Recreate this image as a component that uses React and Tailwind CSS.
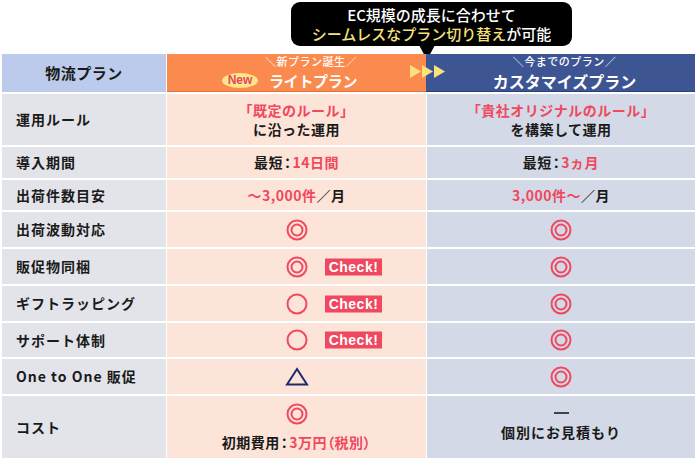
import React from "react";

const RED = "#f0485e";

function DoubleCircle() {
  return (
    <svg width="22" height="22" viewBox="0 0 22 22" className="block">
      <circle cx="11" cy="11" r="9.5" fill="none" stroke={RED} strokeWidth="2" />
      <circle cx="11" cy="11" r="5.5" fill="none" stroke={RED} strokeWidth="2" />
    </svg>
  );
}

function SingleCircle() {
  return (
    <svg width="22" height="22" viewBox="0 0 22 22" className="block">
      <circle cx="11" cy="11" r="9.5" fill="none" stroke={RED} strokeWidth="2" />
    </svg>
  );
}

function Triangle() {
  return (
    <svg width="24" height="19" viewBox="0 0 24 19" className="block">
      <polygon points="12,2 22,17.5 2,17.5" fill="none" stroke="#1d2a6e" strokeWidth="2" strokeLinejoin="miter" />
    </svg>
  );
}

function Check() {
  return (
    <span className="absolute left-[158px] top-1/2 -translate-y-1/2 h-[17px] w-[57px] bg-[#f0485e] text-white text-[14px] leading-[17px] font-bold font-['Liberation_Sans',sans-serif] flex items-center justify-center tracking-[0.5px]">
      Check!
    </span>
  );
}

function Colon() {
  return <span className="[font-feature-settings:'palt'] mx-[1px]">：</span>;
}

function Row({ h, label, orange, blue }) {
  return (
    <div className={`flex gap-x-[1px] ${h}`}>
      <div className="w-[164px] bg-[#e3e4ea] flex items-center pl-[14px] text-[14px] font-bold text-[#1a1a1a] tracking-[1px]">
        {label}
      </div>
      <div className="w-[259px] bg-[#fde4d8] relative flex flex-col items-center justify-center text-[14px] font-bold text-[#1a1a1a] tracking-[0.5px]">
        {orange}
      </div>
      <div className="w-[268px] bg-[#d3d9e6] relative flex flex-col items-center justify-center text-[14px] font-bold text-[#1a1a1a] tracking-[0.5px]">
        {blue}
      </div>
    </div>
  );
}

export default function App() {
  return (
    <div className="w-[700px] h-[461px] bg-white overflow-hidden font-['Noto_Sans_CJK_JP','Noto_Sans',sans-serif]">
      {/* callout area */}
      <div className="h-[54px] pl-[291px] pt-[2px]">
        <div className="relative w-[281px] h-[44px] bg-black rounded-[9px] flex flex-col items-center justify-center text-[15px] leading-[19px] font-medium text-white">
          <div>EC規模の成長に合わせて</div>
          <div>
            <span className="text-[#f6e27c]">シームレスなプラン切り替え</span>が可能
          </div>
          <svg width="16" height="15" viewBox="0 0 16 15" className="absolute left-[128px] top-[43px]">
            <polygon points="0,0 16,0 8,15" fill="black" />
          </svg>
        </div>
      </div>

      {/* table */}
      <div className="pl-[2px] flex flex-col gap-y-[2px]">
        {/* header */}
        <div className="flex h-[38px] relative">
          <div className="w-[164px] bg-[#bccbec] flex items-center justify-center text-[15px] font-bold text-[#1a1a1a] tracking-[0.5px]">
            物流プラン
          </div>
          <div className="w-[1px]" />
          <div className="w-[259px] bg-[#fa8a4e] border-b border-[#e8733a] flex flex-col justify-center text-white">
            <div className="pl-[98px] text-[11px] leading-[12px] font-medium tracking-[0.5px] text-white">＼新プラン誕生／</div>
            <div className="pl-[55px] flex items-center mt-[4px] h-[19px]">
              <span className="w-[36px] h-[15px] rounded-[50%] bg-[#fbe68a] text-[#e8455e] text-[12px] leading-[15px] font-bold font-['Liberation_Sans',sans-serif] flex items-center justify-center">
                New
              </span>
              <span className="ml-[11px] text-[15px] leading-[19px] font-bold tracking-[-0.3px]">ライトプラン</span>
            </div>
          </div>
          <div className="w-[269px] bg-[#3e5594] border-b border-[#2c4178] flex flex-col items-center justify-center pl-[8px] text-white">
            <div className="text-[11px] leading-[12px] font-medium tracking-[0.5px]">＼今までのプラン／</div>
            <div className="text-[16px] leading-[19px] font-bold mt-[5px]">カスタマイズプラン</div>
          </div>
          <div className="absolute left-[408px] top-[11px] flex gap-[1px]">
            {[0, 1, 2].map((i) => (
              <svg key={i} width="11" height="13" viewBox="0 0 11 13" className="block">
                <polygon points="0,0 11,6.5 0,13" fill="#f9e27d" />
              </svg>
            ))}
          </div>
        </div>

        <Row
          h="h-[51px]"
          label="運用ルール"
          orange={
            <>
              <div className="text-[#f0485e] leading-[19px]">「既定のルール」</div>
              <div className="leading-[19px]">に沿った運用</div>
            </>
          }
          blue={
            <>
              <div className="text-[#f0485e] leading-[19px]">「貴社オリジナルのルール」</div>
              <div className="leading-[19px]">を構築して運用</div>
            </>
          }
        />
        <Row
          h="h-[31px]"
          label="導入期間"
          orange={
            <div>
              最短<Colon /><span className="text-[#f0485e]">14日間</span>
            </div>
          }
          blue={
            <div>
              最短<Colon /><span className="text-[#f0485e]">3ヵ月</span>
            </div>
          }
        />
        <Row
          h="h-[30px]"
          label="出荷件数目安"
          orange={
            <div>
              <span className="text-[#f0485e]">～3,000件</span>／月
            </div>
          }
          blue={
            <div>
              <span className="text-[#f0485e]">3,000件～</span>／月
            </div>
          }
        />
        <Row h="h-[35px]" label="出荷波動対応" orange={<DoubleCircle />} blue={<DoubleCircle />} />
        <Row
          h="h-[35px]"
          label="販促物同梱"
          orange={
            <>
              <DoubleCircle />
              <Check />
            </>
          }
          blue={<DoubleCircle />}
        />
        <Row
          h="h-[35px]"
          label="ギフトラッピング"
          orange={
            <>
              <SingleCircle />
              <Check />
            </>
          }
          blue={<DoubleCircle />}
        />
        <Row
          h="h-[34px]"
          label="サポート体制"
          orange={
            <>
              <SingleCircle />
              <Check />
            </>
          }
          blue={<DoubleCircle />}
        />
        <Row h="h-[35px]" label="One to One 販促" orange={<Triangle />} blue={<DoubleCircle />} />
        <Row
          h="h-[62px]"
          label="コスト"
          orange={
            <>
              <DoubleCircle />
              <div className="mt-[8px] leading-[19px]">
                初期費用<Colon /><span className="text-[#f0485e] [font-feature-settings:'palt']">3万円（税別）</span>
              </div>
            </>
          }
          blue={
            <>
              <div className="w-[15px] h-[2px] bg-[#444]" />
              <div className="mt-[9px] leading-[19px] tracking-[1px]">個別にお見積もり</div>
            </>
          }
        />
      </div>
    </div>
  );
}
